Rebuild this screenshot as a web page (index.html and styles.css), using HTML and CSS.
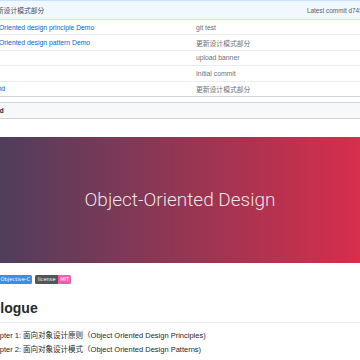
FILE: index.html
```html
<!DOCTYPE html>
<html lang="zh-CN">
<head>
    <meta charset="UTF-8">
    <meta name="viewport" content="width=device-width, initial-scale=1.0">
    <title>Object-Oriented Design</title>
    <link rel="stylesheet" href="styles.css">
</head>
<body>
    <div class="repo">
        <div class="file-list">
            <div class="commit-bar">
                <span class="avatar"></span>
                <span class="commit-msg">更新设计模式部分</span>
                <span class="latest">Latest commit d745c3b on 9 Mar</span>
            </div>
            <div class="file-row">
                <span class="icon"></span>
                <a class="name" href="#">OC-Object-Oriented design principle Demo</a>
                <span class="message">git test</span>
            </div>
            <div class="file-row">
                <span class="icon"></span>
                <a class="name" href="#">OC-Object-Oriented design pattern Demo</a>
                <span class="message">更新设计模式部分</span>
            </div>
            <div class="file-row">
                <span class="icon"></span>
                <a class="name" href="#">images</a>
                <span class="message">upload banner</span>
            </div>
            <div class="file-row">
                <span class="icon"></span>
                <a class="name" href="#">LICENSE</a>
                <span class="message">Initial commit</span>
            </div>
            <div class="file-row">
                <span class="icon"></span>
                <a class="name" href="#">README.md</a>
                <span class="message">更新设计模式部分</span>
            </div>
        </div>

        <div class="readme">
            <div class="readme-head">
                <span class="icon"></span>README.md
            </div>
            <div class="markdown">
                <div class="banner">Object-Oriented Design</div>

                <p class="badges">
                    <span class="badge"><span class="label">language</span><span class="value blue">Objective-C</span></span>
                    <span class="badge"><span class="label">license</span><span class="value pink">MIT</span></span>
                </p>

                <h1>Prologue</h1>

                <ul>
                    <li>Chapter 1: 面向对象设计原则（Object Oriented Design Principles)</li>
                    <li>Chapter 2: 面向对象设计模式（Object Oriented Design Patterns)</li>
                </ul>
            </div>
        </div>
    </div>
</body>
</html>
```

FILE: styles.css
```css
body {
    margin: 0;
    font-family: 'Liberation Sans', Arial, 'Noto Sans CJK SC', sans-serif;
    color: #24292e;
    background: #fff;
    overflow: hidden;
}

.repo {
    width: 456px;
    margin-left: -48px;
}

/* file list */

.file-list {
    border: 1px solid #d1d5da;
    border-top-color: #c8e1ff;
    border-radius: 3px;
    font-size: 6.8px;
}

.commit-bar {
    display: flex;
    align-items: center;
    height: 18px;
    padding: 0 7px 0 8px;
    background: #f1f8ff;
    border-bottom: 1px solid #c8e1ff;
}

.avatar {
    width: 10px;
    height: 10px;
    margin-right: 19px;
}

.commit-msg {
    color: #444d56;
}

.latest {
    margin-left: auto;
    color: #586069;
    font-size: 6.4px;
}

.file-row {
    display: flex;
    align-items: center;
    height: 14.4px;
    padding-left: 2px;
    border-bottom: 1px solid #eaecef;
}

.file-row:last-child {
    border-bottom: none;
}

.file-row .icon {
    width: 8px;
    margin-right: 1.7px;
}

.name {
    flex: 0 0 231.3px;
    color: #0366d6;
    text-decoration: none;
    white-space: nowrap;
}

.message {
    flex: 1;
    color: #6a737d;
}

/* readme */

.readme {
    margin-top: 5px;
    border: 1px solid #d1d5da;
    border-radius: 3px;
}

.readme-head {
    display: flex;
    align-items: center;
    height: 15px;
    padding-left: 2px;
    background: #f6f8fa;
    border-bottom: 1px solid #d1d5da;
    font-size: 6.5px;
    font-weight: bold;
}

.readme-head .icon {
    width: 6px;
    margin-right: 3px;
}

.markdown {
    padding: 18px 24px 20px;
}

.banner {
    height: 126px;
    display: flex;
    align-items: center;
    justify-content: center;
    background: linear-gradient(to right, #463f5d, #e02d4a);
    color: rgba(255, 255, 255, 0.88);
    font-family: Roboto, 'Liberation Sans', sans-serif;
    font-weight: 300;
    font-size: 19px;
}

.badges {
    display: flex;
    gap: 3px;
    margin: 12px 0 0 -7px;
}

.badge {
    display: flex;
    height: 9px;
    line-height: 9px;
    border-radius: 1.5px;
    overflow: hidden;
    font-family: 'DejaVu Sans', Verdana, sans-serif;
    font-size: 5.1px;
    color: #fff;
}

.badge span {
    padding: 0 2.3px;
}

.label {
    background: #555;
}

.blue {
    background: #3a8ee6;
}

.pink {
    background: #fa5aaa;
}

.markdown h1 {
    margin: 16px 0 0;
    padding-bottom: 4.5px;
    border-bottom: 1px solid #eaecef;
    font-size: 14px;
    line-height: 1.25;
    font-weight: bold;
}

.markdown ul {
    margin: 7.5px 0 0;
    padding-left: 9px;
    font-size: 7.5px;
    line-height: 1.5;
    color: #24292e;
}

.markdown li + li {
    margin-top: 1.9px;
}
```
